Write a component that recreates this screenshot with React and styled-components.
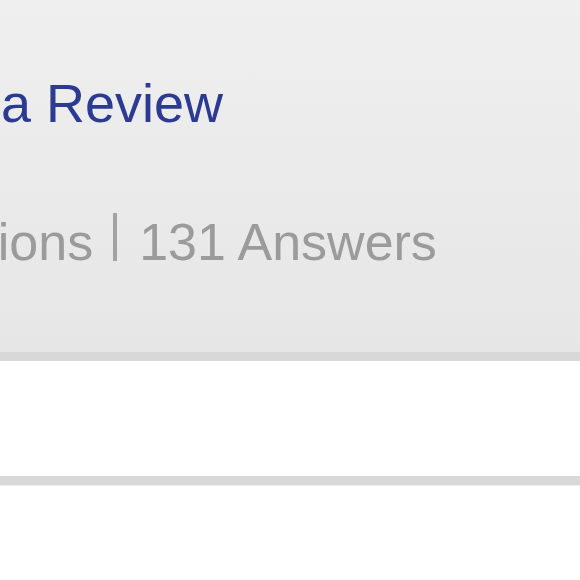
import styled, { createGlobalStyle } from 'styled-components';

const Global = createGlobalStyle`
  html, body {
    margin: 0;
    padding: 0;
    background: #fff;
    overflow: hidden;
  }
  body {
    font-family: "Liberation Sans", Arial, sans-serif;
  }
`

const Page = styled.div`
  width: 580px;
  height: 580px;
  overflow: hidden;
  display: flex;
  flex-direction: column;
`

/* the shot is a crop: the start of both lines sits left of the frame */
const Header = styled.div`
  height: 361px;
  box-sizing: border-box;
  flex-shrink: 0;
  background: linear-gradient(to bottom, #efefef 0%, #e6e6e6 100%);
  border-bottom: 9px solid #d8d8d8;
  padding-top: 76px;
  margin-left: -139px;
  display: flex;
  flex-direction: column;
  gap: 83px;
`

const Title = styled.a`
  display: block;
  font-size: 54px;
  line-height: 54px;
  color: #2b3a92;
  text-decoration: none;
  white-space: nowrap;
`

const Stats = styled.div`
  font-size: 52px;
  line-height: 52px;
  color: #9b9b9b;
  white-space: nowrap;
  margin-left: -2px;
`

const Sep = styled.span`
  display: inline-block;
  width: 4px;
  height: 48px;
  background: #a2a2a2;
  margin: 0 22px 0 20px;
  vertical-align: -1px;
`

const Row = styled.div`
  height: 124px;
  box-sizing: border-box;
  flex-shrink: 0;
  background: #fff;
  border-bottom: 9px solid #d8d8d8;
  box-shadow: 0 1px 0 #ececec;
`

const App = () => {
    return (
        <Page>
            <Global />
            <Header>
                <Title href="#">Write a Review</Title>
                <Stats>
                    Questions<Sep />131 Answers
                </Stats>
            </Header>
            <Row />
        </Page>
    );
};

export default App;
